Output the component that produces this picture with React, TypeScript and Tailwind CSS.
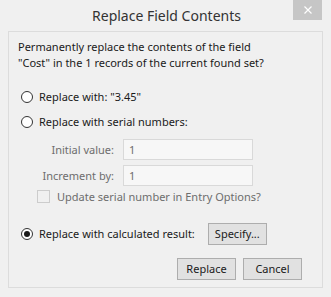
import React from "react"

const font = { fontFamily: '"Noto Sans", "Segoe UI", sans-serif' }

function Radio({ checked }: { checked?: boolean }) {
    return (
        <span className="w-[12px] h-[12px] rounded-full border border-[#333333] bg-white flex items-center justify-center shrink-0">
            {checked && <span className="w-[6px] h-[6px] rounded-full bg-[#1a1a1a]" />}
        </span>
    )
}

function Btn({ label, w }: { label: string; w: string }) {
    return (
        <div className={`${w} h-[22px] border border-[#adadad] bg-[#e1e1e1] flex items-center justify-center text-[11px] text-[#1a1a1a]`}>
            {label}
        </div>
    )
}

export default function App() {
    return (
        <div className="relative w-[331px] h-[297px] bg-[#f0f0f0] text-[#1a1a1a] overflow-hidden" style={font}>
            {/* title bar */}
            <div className="h-[31px] flex items-center justify-center text-[14px] text-[#333333] pl-[2px] pb-[1px]">
                Replace Field Contents
            </div>
            <div className="absolute top-0 right-[9px] w-[29px] h-[20px] bg-[#c6c6c6] flex items-center justify-center">
                <svg width="8" height="8" viewBox="0 0 8 8">
                    <path d="M0.5 0.5 L7.5 7.5 M7.5 0.5 L0.5 7.5" stroke="#ffffff" strokeWidth="1.2" />
                </svg>
            </div>

            {/* body */}
            <div className="mx-[8px] h-[257px] border border-[#dcdcdc] flex flex-col text-[11px] leading-[16px]">
                <p className="pl-[9px] pt-[7px]">
                    Permanently replace the contents of the field
                    <br />
                    "Cost" in the 1 records of the current found set?
                </p>

                <div className="mt-[18px] pl-[12px] flex items-center gap-[6px] h-[16px]">
                    <Radio />
                    <span>Replace with: "3.45"</span>
                </div>
                <div className="mt-[9px] pl-[12px] flex items-center gap-[6px] h-[16px]">
                    <Radio />
                    <span>Replace with serial numbers:</span>
                </div>

                <div className="mt-[9px] grid grid-cols-[105px_130px] gap-x-[9px] gap-y-[5px] items-center text-[#6d6d6d]">
                    <span className="text-right">Initial value:</span>
                    <div className="h-[21px] border border-[#d9d9d9] bg-[#f7f7f7] px-[5px] flex items-center">1</div>
                    <span className="text-right">Increment by:</span>
                    <div className="h-[21px] border border-[#d9d9d9] bg-[#f7f7f7] px-[5px] flex items-center">1</div>
                </div>

                <div className="mt-[4px] pl-[28px] flex items-center gap-[7px] h-[13px] text-[#6d6d6d]">
                    <span className="w-[13px] h-[13px] border border-[#cccccc] bg-[#f0f0f0] shrink-0" />
                    <span>Update serial number in Entry Options?</span>
                </div>

                <div className="mt-[20px] pl-[12px] flex items-center gap-[6px] h-[22px]">
                    <Radio checked />
                    <span>Replace with calculated result:</span>
                    <div className="ml-[7px]">
                        <Btn label="Specify..." w="w-[59px]" />
                    </div>
                </div>

                <div className="mt-[13px] pl-[168px] flex gap-[7px]">
                    <Btn label="Replace" w="w-[59px]" />
                    <Btn label="Cancel" w="w-[59px]" />
                </div>
            </div>
        </div>
    )
}
